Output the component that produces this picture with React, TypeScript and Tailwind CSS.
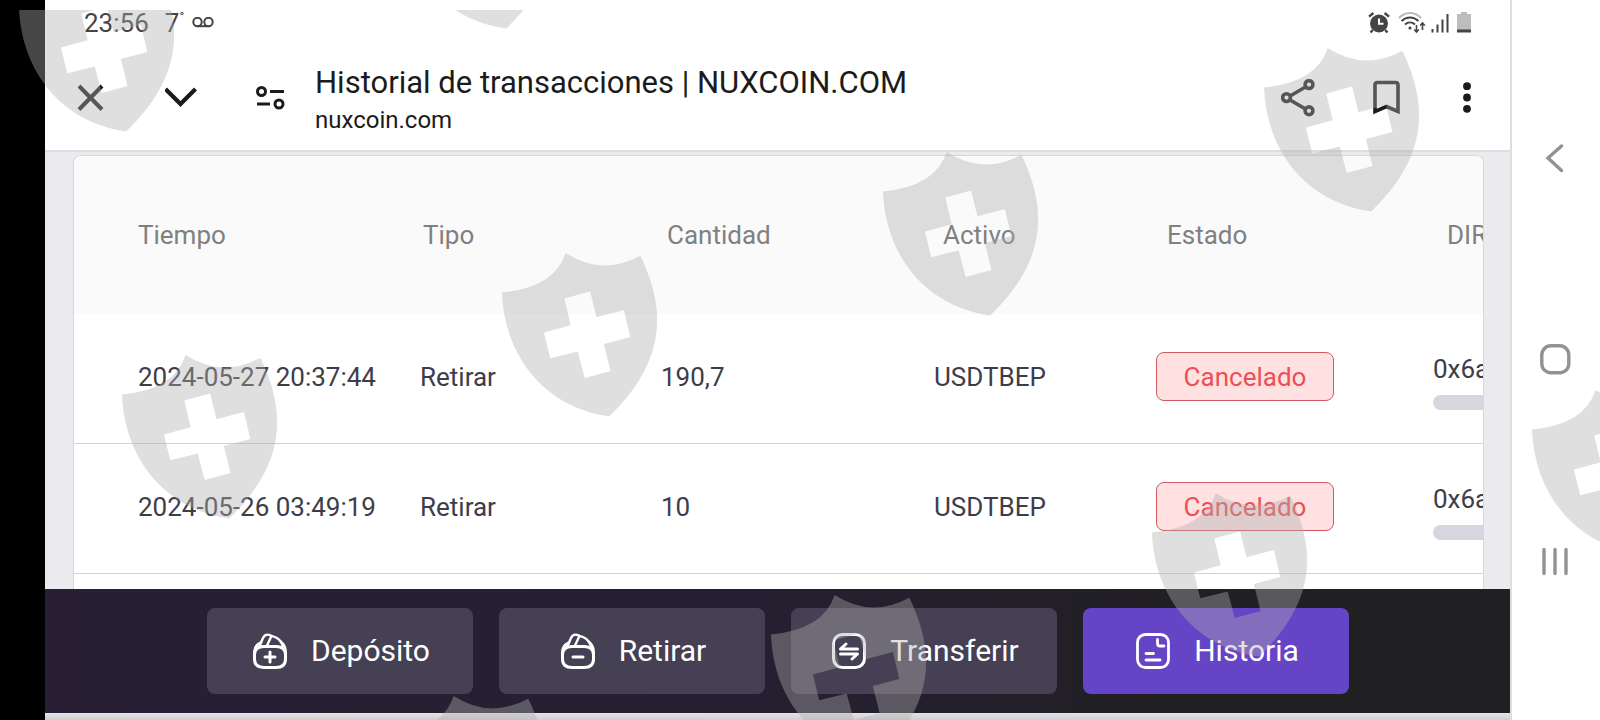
import type { ReactNode } from "react";

const rows = [
  { time: "2024-05-27 20:37:44", type: "Retirar", amount: "190,7", asset: "USDTBEP", status: "Cancelado", address: "0x6a" },
  { time: "2024-05-26 03:49:19", type: "Retirar", amount: "10", asset: "USDTBEP", status: "Cancelado", address: "0x6a" },
];

const columns = ["Tiempo", "Tipo", "Cantidad", "Activo", "Estado", "DIR"];

const shields = [
  [19, -32],
  [399, -135],
  [1264, 48],
  [883, 152],
  [502, 253],
  [122, 355],
  [1532, 390],
  [1152, 493],
  [771, 595],
  [390, 696],
];

function Watermark() {
  return (
    <svg className="pointer-events-none absolute inset-0 h-full w-full" viewBox="0 0 1600 720" preserveAspectRatio="xMinYMin slice" aria-hidden="true">
      <defs>
        <clipPath id="area">
          <rect x="0" y="10" width="1600" height="710" />
        </clipPath>
        <path
          id="shield"
          fillRule="evenodd"
          d="M0 118Q157 103 190 0Q298 70 413 8C496 180 483 330 320 488C120 460 6 300 0 118ZM186 136L205 216L125 237L144 314L226 294L247 373L324 352L304 272L383 251L364 170L282 192L263 115Z"
        />
      </defs>
      <g clipPath="url(#area)" fill="#afafaf" fillOpacity="0.4">
        {shields.map(([x, y]) => (
          <use key={`${x}-${y}`} href="#shield" transform={`translate(${x} ${y}) scale(0.335)`} />
        ))}
      </g>
    </svg>
  );
}

function StatusBar() {
  return (
    <div className="flex h-[46px] items-center justify-between pl-[39px] pr-[39px] text-[#444]">
      <div className="flex items-center text-[26px] leading-8">
        <span>23:56</span>
        <span className="ml-4">7</span>
        <span className="self-start text-[13px] leading-5">°</span>
        <svg className="ml-2 h-3 w-[22px]" viewBox="0 0 22 12" fill="none" stroke="currentColor" strokeWidth="2">
          <circle cx="5.5" cy="5" r="4.2" />
          <circle cx="16.5" cy="5" r="4.2" />
          <path d="M5.5 9.2h11" />
        </svg>
      </div>
      <div className="flex items-center">
        <svg className="h-[22px] w-[22px]" viewBox="0 0 22 22" fill="none" stroke="currentColor">
          <circle cx="11" cy="11.5" r="9" fill="currentColor" stroke="none" />
          <path d="M1 4.700L5.400 1M21 4.700L16.600 1M4.800 18L2.500 20.500M17.200 18L19.500 20.500" strokeWidth="2.400" />
          <path d="M11 6.500v5.200h4.500" stroke="#fff" strokeWidth="2" />
        </svg>
        <svg className="ml-2 h-[22px] w-7" viewBox="0 0 28 22" fill="none" stroke="currentColor" strokeWidth="2">
          <path d="M1 6C7.500-.7 16.500-.7 23 6" stroke="#bbb" />
          <path d="M3.500 9C8.500 4.300 15.500 4.300 20.500 9" />
          <path d="M7 12.500C10 9.800 14 9.800 17 12.500" />
          <circle cx="12" cy="16" r="1.600" fill="currentColor" stroke="none" />
          <path d="M18.500 13v7M16.200 17.500l2.300 2.500l2.300-2.500M24.500 18v-7M22.200 13.500l2.300-2.500l2.300 2.500" strokeWidth="1.600" />
        </svg>
        <svg className="ml-[5px] h-[22px] w-[18px]" viewBox="0 0 18 22" stroke="currentColor" strokeWidth="2">
          <path d="M1.500 17V20.500M6.500 12.500V20.500M11.500 7.500V20.500M16.500 2V20.500" />
        </svg>
        <svg className="ml-2 h-[22px] w-[14px]" viewBox="0 0 14 22">
          <path d="M4 0h6v2h4v18H0V2h4z" fill="#bdbdbd" />
          <path d="M0 17.500h14v3H0z" fill="#444" />
        </svg>
      </div>
    </div>
  );
}

function Toolbar() {
  return (
    <header className="flex h-[104px] items-center pl-[30px] pr-[35px] text-[#1b1b1b]">
      <div className="flex shrink-0 items-center gap-[58px]">
        <button type="button" aria-label="Cerrar">
          <svg className="h-8 w-8" viewBox="0 0 32 32" fill="none" stroke="currentColor" strokeWidth="4">
            <path d="M4 4L27 27.500M27 4L4 27.500" />
          </svg>
        </button>
        <button type="button" aria-label="Minimizar">
          <svg className="h-8 w-8" viewBox="0 0 32 32" fill="none" stroke="currentColor" strokeWidth="4.200">
            <path d="M.5 7L15.500 22L30.500 7" />
          </svg>
        </button>
        <button type="button" aria-label="Información del sitio">
          <svg className="h-8 w-8" viewBox="0 0 32 32" fill="none" stroke="currentColor" strokeWidth="3">
            <circle cx="6.500" cy="9.500" r="4" />
            <path d="M15 9.500h14M2 22h13" />
            <circle cx="24" cy="22" r="4" />
          </svg>
        </button>
      </div>
      <div className="ml-7 min-w-0 flex-1 pt-[2px]">
        <h1 className="truncate text-[31px] leading-[42px]">Historial de transacciones | NUXCOIN.COM</h1>
        <p className="text-2xl leading-8">nuxcoin.com</p>
      </div>
      <div className="flex shrink-0 items-center gap-[55px]">
        <button type="button" aria-label="Compartir">
          <svg className="h-[38px] w-[34px]" viewBox="0 0 34 38" fill="none" stroke="currentColor" strokeWidth="3.600">
            <path d="M9.500 16.800L24.500 8M9.500 21.200L24.500 30" />
            <circle cx="5.500" cy="18.600" r="3.900" />
            <circle cx="28" cy="5.600" r="3.900" />
            <circle cx="28" cy="31.800" r="3.900" />
          </svg>
        </button>
        <button type="button" aria-label="Guardar">
          <svg className="h-[38px] w-[34px]" viewBox="0 0 34 38" fill="none" stroke="currentColor" strokeWidth="3.600">
            <path d="M5 32.500V6Q5 3.500 7.500 3.500H25.500Q28 3.500 28 6V32.500L16.500 27.500Z" />
          </svg>
        </button>
        <button type="button" aria-label="Más opciones">
          <svg className="h-[38px] w-4" viewBox="0 0 16 38" fill="currentColor">
            <circle cx="8" cy="7.200" r="3.900" />
            <circle cx="8" cy="18.500" r="3.900" />
            <circle cx="8" cy="29.800" r="3.900" />
          </svg>
        </button>
      </div>
    </header>
  );
}

function HistoryTable() {
  return (
    <div className="h-full overflow-hidden rounded-t-lg border border-b-0 border-[#d8d8dc] bg-white">
      <table className="block text-[26px] leading-9">
        <thead className="block bg-[#fafafa]">
          <tr className="grid h-[158px] grid-cols-[285px_244px_276px_224px_280px_300px] items-center pl-16 text-left text-[#808080]">
            {columns.map((name) => (
              <th key={name} className="font-normal" scope="col">{name}</th>
            ))}
          </tr>
        </thead>
        <tbody className="block text-[#3d3d49]">
          {rows.map((row) => (
            <tr key={row.time} className="grid h-[130px] grid-cols-[282px_241px_273px_222px_277px_300px] items-center border-b border-[#d2d2d4] pb-1 pl-16">
              <td>{row.time}</td>
              <td>{row.type}</td>
              <td>{row.amount}</td>
              <td>{row.asset}</td>
              <td>
                <span className="flex h-[49px] w-[178px] items-center justify-center rounded-lg border border-[#cf5a62] bg-[#ffe1e1] text-[#eb4f57]">{row.status}</span>
              </td>
              <td className="pt-2">
                <div>{row.address}</div>
                <div className="mt-2 h-[15px] w-[200px] rounded-full bg-[#d6d6de]" />
              </td>
            </tr>
          ))}
        </tbody>
      </table>
    </div>
  );
}

function WalletIcon({ children }: { children: ReactNode }) {
  return (
    <svg className="h-9 w-[34px]" viewBox="0 0 34 36" fill="none" stroke="currentColor" strokeWidth="3" strokeLinecap="round" strokeLinejoin="round">
      <path d="M11 13.500H23Q32.500 13.500 32.500 22V26Q32.500 34.500 23 34.500H11Q1.500 34.500 1.500 26V22Q1.500 13.500 11 13.500Z" />
      <path d="M1.500 21V18Q2 12 8 9.500M32.500 21V18Q32.500 12.500 28 9" strokeWidth="2.600" />
      <path d="M6.500 13L10 5Q12 .8 16 1.800L23 4.500Q28.500 7.500 30 13.500M14 12.500L18 4" strokeWidth="2.400" />
      {children}
    </svg>
  );
}

function BottomBar() {
  const items = [
    { label: "Depósito", icon: <WalletIcon><path d="M17 19v10M12 24h10" /></WalletIcon> },
    { label: "Retirar", icon: <WalletIcon><path d="M12 24h10" /></WalletIcon> },
    {
      label: "Transferir",
      icon: (
        <svg className="h-9 w-[34px]" viewBox="0 0 34 36" fill="none" stroke="currentColor" strokeWidth="3" strokeLinecap="round" strokeLinejoin="round">
          <rect x="1.500" y="1.500" width="31" height="33" rx="9" />
          <path d="M25.500 16H8.500L14 11M8.500 21H25.500L20 26" />
        </svg>
      ),
    },
    {
      label: "Historia",
      active: true,
      icon: (
        <svg className="h-9 w-[34px]" viewBox="0 0 34 36" fill="none" stroke="currentColor" strokeWidth="2.800" strokeLinecap="round" strokeLinejoin="round">
          <rect x="1.500" y="1.500" width="31" height="33" rx="8" />
          <path d="M21.500 6.500V10.500Q21.500 13 24 13H28M10 20.500h7.500M10 27h14" />
        </svg>
      ),
    },
  ];

  return (
    <nav className="flex h-[124px] shrink-0 items-center justify-center gap-[26px] bg-gradient-to-r from-[#281f34] via-[#261f31] via-50% to-[#201f22] to-80%">
      {items.map((item) => (
        <button
          key={item.label}
          type="button"
          className={`flex h-[86px] w-[266px] items-center justify-center gap-6 rounded-lg pl-1 text-[30px] leading-9 text-white ${item.active ? "bg-[#6544c6]" : "bg-[#454053]"}`}
        >
          {item.icon}
          {item.label}
        </button>
      ))}
    </nav>
  );
}

function SystemNav() {
  return (
    <aside className="flex w-[90px] shrink-0 flex-col items-center justify-center gap-[170px] border-l-2 border-[#dedede] bg-white text-[#929292]">
      <button type="button" aria-label="Atrás">
        <svg className="h-8 w-8" viewBox="0 0 32 32" fill="none" stroke="currentColor" strokeWidth="3.400" strokeLinecap="round">
          <path d="M21.500 4L8 16L21.500 28.500" />
        </svg>
      </button>
      <button type="button" aria-label="Inicio">
        <svg className="h-8 w-8" viewBox="0 0 32 32" fill="none" stroke="currentColor" strokeWidth="3.400">
          <rect x="1.800" y="1.800" width="27" height="27" rx="9" />
        </svg>
      </button>
      <button type="button" aria-label="Recientes">
        <svg className="h-8 w-8" viewBox="0 0 32 32" fill="none" stroke="currentColor" strokeWidth="3.400" strokeLinecap="round">
          <path d="M4 3.500V27.500M15 3.500V27.500M26 3.500V27.500" />
        </svg>
      </button>
    </aside>
  );
}

export default function App() {
  return (
    <div className="relative flex h-screen overflow-hidden bg-white font-['Roboto',sans-serif]">
      <div className="w-[45px] shrink-0 bg-black" />
      <main className="flex min-w-0 flex-1 flex-col">
        <StatusBar />
        <Toolbar />
        <section className="min-h-0 flex-1 border-t-2 border-[#dedede] bg-[#ebebef] pl-7 pr-[26px] pt-[3px]">
          <HistoryTable />
        </section>
        <BottomBar />
        <div className="h-[7px] shrink-0 bg-gradient-to-b from-[#e4e3e7] to-[#cfced1]" />
      </main>
      <SystemNav />
      <Watermark />
    </div>
  );
}
